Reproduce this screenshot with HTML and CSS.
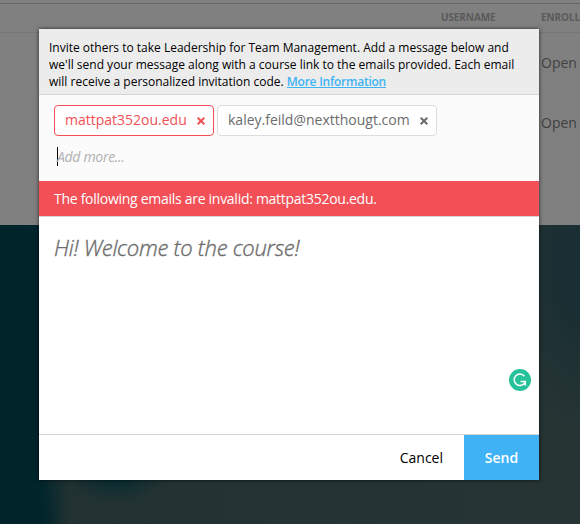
FILE: index.html
```html
<!DOCTYPE html>
<html lang="en">
<head>
<meta charset="utf-8">
<title>Invite</title>
<link rel="stylesheet" href="styles.css">
</head>
<body>
<div class="page">
  <div class="roster">
    <div class="roster-head"><span class="col-user">Username</span><span class="col-status">Enrollment</span></div>
    <div class="roster-row"><span class="col-status">Open</span></div>
    <div class="roster-row"><span class="col-status">Open</span></div>
  </div>
</div>
<div class="mask">
  <div class="modal">
    <div class="intro"><span class="line l1">Invite others to take Leadership for Team Management. Add a message below and</span><span class="line l2">we'll send your message along with a course link to the emails provided. Each email</span><span class="line l3">will receive a personalized invitation code. <a class="more">More Information</a></span></div>
    <div class="recipients">
      <div class="tokens">
        <div class="token invalid"><span class="t1">mattpat352ou.edu</span><svg class="x" viewBox="0 0 8 8"><path d="M.7 .7l6.6 6.6M7.3 .7l-6.6 6.6"/></svg></div>
        <div class="token"><span class="t2">kaley.feild@nextthougt.com</span><svg class="x" viewBox="0 0 8 8"><path d="M.7 .7l6.6 6.6M7.3 .7l-6.6 6.6"/></svg></div>
      </div>
      <div class="add"><span class="caret"></span><span class="placeholder">Add more...</span></div>
    </div>
    <div class="error"><span>The following emails are invalid: mattpat352ou.edu.</span></div>
    <div class="message">
      <span class="message-text">Hi! Welcome to the course!</span>
      <svg class="checker" viewBox="0 0 22 22"><circle cx="11" cy="11" r="11" fill="#26c29a"/><path d="M15.4 7.2A5.7 5.7 0 1 0 16 13.4M11.6 12.4H16.3V16.6" fill="none" stroke="#fff" stroke-width="1.5"/></svg>
    </div>
    <div class="footer"><span class="cancel">Cancel</span><span class="send">Send</span></div>
  </div>
</div>
</body>
</html>
```

FILE: styles.css
```css
* { box-sizing: border-box; }
body { margin: 0; width: 580px; height: 524px; overflow: hidden; font-family: "Open Sans", sans-serif; }
span { white-space: nowrap; }
.page {
  height: 524px;
  background: radial-gradient(ellipse 60px 70px at 0 524px, #01242b 50%, transparent),
    radial-gradient(ellipse 50px 28px at 115px 475px, #032a30, transparent),
    radial-gradient(ellipse 70px 170px at 580px 260px, #1a2f33 30%, transparent),
    linear-gradient(90deg, #01242b 0, #01252c 7%, #223232 12%, #243333 60%, #263434 100%);
}
.roster { height: 225px; background: #808080; overflow: hidden; padding-top: 3px; }
.roster-head {
  display: flex; height: 30px; border-top: 1px solid #666; border-bottom: 1px solid #777;
  padding: 0 0 2px 441px; align-items: center; font-size: 10px; font-weight: 700; color: #5a5a5a; text-transform: uppercase; letter-spacing: -.1px;
}
.roster-head .col-user { flex: 0 0 100px; }
.roster-row { height: 60px; line-height: 60px; padding-left: 541px; font-size: 14px; color: #404040; }
.mask { position: absolute; inset: 0; padding: 29px 0 0 39px; }
.modal {
  width: 500px; height: 451px; background: #fff; display: flex; flex-direction: column;
  box-shadow: 0 0 4px rgba(0,0,0,.7);
}
.intro { height: 66px; padding: 10px 10px 0; background: #ececec; border-bottom: 1px solid #d4d4d4; font-size: 12px; line-height: 17px; color: #000; }
.line { display: block; }
.more { color: #3fb3f6; font-weight: 600; text-decoration: underline; letter-spacing: -.25px; }
.recipients { height: 86px; background: #fbfbfb; padding: 10px 15px 0; }
.tokens { display: flex; gap: 3px; }
.token {
  height: 31px; display: flex; align-items: center; justify-content: space-between; padding: 0 8px 0 10px;
  border: 1px solid #ddd; border-radius: 4px; background: #fff; color: #6c6c6c; font-size: 14px; width: 220px;
}
.token span { position: relative; top: -1px; }
.token.invalid { border-color: #f25056; color: #f25056; width: 160px; }
.x { width: 8px; height: 8px; fill: none; stroke: currentColor; stroke-width: 2; }
.add { display: flex; align-items: center; height: 19px; margin: 11px 0 0 3px; }
.caret { width: 1px; height: 19px; background: #000; }
.placeholder { margin-left: -1px; font-size: 14px; font-style: italic; font-weight: 400; color: #b0b0b0; letter-spacing: -.3px; }
.error { height: 35px; background: #f25056; color: #fff; font-size: 14px; line-height: 35px; padding-left: 15px; letter-spacing: -.28px; }
.message { height: 219px; border-top: 1px solid #d4d4d4; border-bottom: 1px solid #d4d4d4; padding: 15px 8px 43px 15px; display: flex; flex-direction: column; align-items: flex-start; justify-content: space-between; }
.message-text { font-size: 22px; font-style: italic; font-weight: 300; line-height: 32px; color: #6c6c6c; letter-spacing: -.27px; -webkit-text-stroke: .35px #6c6c6c; position: relative; top: -1px; }
.checker { width: 22px; height: 22px; align-self: flex-end; }
.footer { height: 45px; display: flex; justify-content: flex-end; line-height: 45px; font-size: 14px; color: #000; }
.cancel { padding-right: 21px; }
.send { width: 75px; text-align: center; background: #3fb3f6; color: #fff; font-weight: 600; }
```
